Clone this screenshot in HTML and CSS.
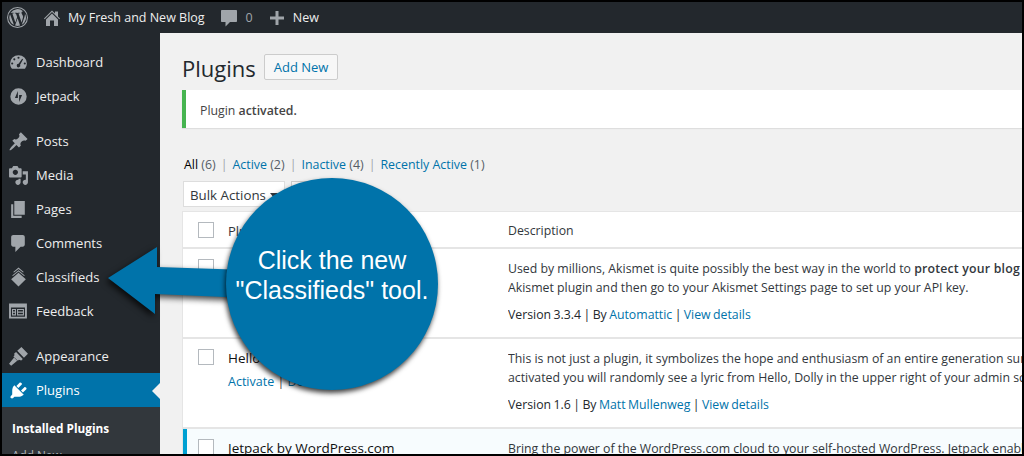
FILE: index.html
```html
<!DOCTYPE html>
<html lang="en">
<head>
<meta charset="utf-8">
<title>Plugins</title>
<link rel="stylesheet" href="styles.css">
</head>
<body>
<div class="frame">
  <header class="topbar">
    <svg class="wp" viewBox="0 0 20 20"><path fill-rule="evenodd" d="M10 0a10 10 0 1 0 0 20a10 10 0 0 0 0-20zM10 1a9 9 0 1 1 0 18a9 9 0 0 1 0-18zM2.200 10c0 3.100 1.800 5.800 4.400 7L2.900 6.800A7.800 7.800 0 0 0 2.200 10zM15.300 9.600c0-1-.4-1.600-.7-2.200-.4-.7-.8-1.200-.8-1.900 0-.7.600-1.400 1.400-1.400h.1A7.800 7.800 0 0 0 3.400 5.600h.5c.8 0 2.100-.1 2.100-.1.400 0 .5.600 0 .6l-.9.100 2.900 8.500 1.700-5.100-1.200-3.400-.8-.1c-.4 0-.4-.7 0-.6 0 0 1.300.1 2.100.1.800 0 2.100-.1 2.100-.1.400 0 .5.600 0 .6l-.9.100 2.900 8.500.8-2.700c.3-1.100.6-2 .6-2.700zM10.100 10.700l-2.400 7a7.800 7.800 0 0 0 4.800-.1l-.1-.1zM17 6.200c0 .3.100.6.100.9 0 .8-.2 1.700-.6 2.900l-2.400 6.900A7.800 7.800 0 0 0 17 6.200z"/></svg>
    <a class="bar-item site"><svg class="bar-icon" viewBox="0 0 20 20"><path d="M16 8.500l2 2-.7.700L10 3.900 2.700 11.200 2 10.500 10 2.500l3 3V3.500h3zM10 5.500l6 6V18h-4v-5.500H8V18H4v-6.500z"/></svg><span>My Fresh and New Blog</span></a>
    <a class="bar-item comments"><svg class="bar-icon" viewBox="0 0 20 20"><path d="M3 2h14c.6 0 1 .4 1 1v10c0 .6-.4 1-1 1h-6l-4.500 4.500V14H3c-.6 0-1-.4-1-1V3c0-.6.400-1 1-1z"/></svg><span class="count">0</span></a>
    <a class="bar-item new"><svg class="bar-icon" viewBox="0 0 20 20"><path d="M8.500 3h3v5.500H17v3h-5.500V17h-3v-5.500H3v-3h5.500z"/></svg><span>New</span></a>
  </header>
  <div class="body">
    <nav class="side">
      <ul class="menu">
        <li><svg viewBox="0 0 20 20"><path fill-rule="evenodd" d="M10 3a8 8 0 0 0-8 8c0 2 .7 3.700 1.800 5h12.400A8 8 0 0 0 18 11a8 8 0 0 0-8-8zM10 4.500a1 1 0 1 1 0 2a1 1 0 0 1 0-2zM6 6a1 1 0 1 1 0 2a1 1 0 0 1 0-2zM13.500 6.500l.9.500-2.900 5.200a1.700 1.700 0 1 1-1.400-.9zM4 10a1 1 0 1 1 0 2a1 1 0 0 1 0-2zM16 10a1 1 0 1 1 0 2a1 1 0 0 1 0-2z"/></svg>Dashboard</li>
        <li><svg viewBox="0 0 20 20"><path fill-rule="evenodd" d="M10 2.200a7.800 7.800 0 1 0 0 15.600a7.800 7.800 0 0 0 0-15.600zM9.400 4.800v6.700H6.600zM10.600 15.200V8.500h2.800z"/></svg>Jetpack</li>
        <li class="sep"><svg viewBox="0 0 20 20"><path d="M10.440 3.020l1.820-1.820 6.360 6.350-1.830 1.820c-1.050-.68-2.480-.57-3.410.36l-.75.75c-.92.93-1.040 2.350-.35 3.410l-1.830 1.820-2.410-2.410-2.800 2.790c-.42.420-3.380 2.710-3.800 2.290s1.860-3.390 2.280-3.810l2.790-2.790L4.100 9.360l1.830-1.820c1.050.69 2.480.57 3.400-.36l.75-.75c.93-.92 1.050-2.350.36-3.410z"/></svg>Posts</li>
        <li><svg viewBox="0 0 20 20"><path fill-rule="evenodd" d="M13 11V4c0-.55-.45-1-1-1h-1.670L9 1H5L3.670 3H2c-.55 0-1 .45-1 1v7c0 .55.450 1 1 1h10c.55 0 1-.45 1-1zM7 4.500c1.380 0 2.500 1.120 2.500 2.500S8.380 9.500 7 9.500 4.500 8.380 4.500 7 5.620 4.500 7 4.500zM14 6h5v10.500c0 1.380-1.120 2.500-2.500 2.500S14 17.880 14 16.500s1.120-2.500 2.500-2.500c.17 0 .34.020.5.050V9h-3V6zm-4 8.050V13h2v3.500c0 1.380-1.120 2.500-2.500 2.500S7 17.880 7 16.500 8.120 14 9.500 14c.17 0 .34.020.5.050z"/></svg>Media</li>
        <li><svg viewBox="0 0 20 20"><path d="M6 15V2h10v13H6zm-1 1h8v2H3V5h2v11z"/></svg>Pages</li>
        <li><svg viewBox="0 0 20 20"><path d="M5 2h9c1.100 0 2 .9 2 2v7c0 1.100-.9 2-2 2h-2l-5 5v-5H5c-1.100 0-2-.9-2-2V4c0-1.100.9-2 2-2z"/></svg>Comments</li>
        <li class="classified"><svg viewBox="0 0 20 20"><path d="M10 .5l5 4.200-.7.600L10 1.800 5.700 5.300 5 4.700zM10 3l6 5-.7.600L10 4.300 4.700 8.600 4 8zM10 5.500l7 6.200-7 6.800-7-6.800z"/></svg>Classifieds</li>
        <li><svg viewBox="0 0 20 20"><path fill-rule="evenodd" d="M1 2.400h17v14.200H1zM2.800 6.200v8.800h13.400V6.200zM3.800 7.600h3.800v6.200H3.800zM4.800 8.600v1.500h1.800V8.600zM4.800 11.200v1.500h1.800v-1.500zM8.600 7.600h6.600v6.200H8.600zM9.600 8.600v1.500h4.600V8.600zM9.600 11.200v1.500h4.600v-1.500z"/></svg>Feedback</li>
        <li class="sep"><svg viewBox="0 0 20 20"><path d="M8.800 4.600L12.800 1l6.200 6.400-3.800 3.900zM7.700 5.700l6.400 6.600-1.500 1.400-2.200-.6-1 1-4.200-4.200 1-1-.3-1.800zM5.800 11l3 3L3 18.700 1 17z"/></svg>Appearance</li>
        <li class="current"><svg viewBox="0 0 20 20"><path d="M13.110 4.360L9.870 7.600 8 5.730l3.240-3.240c.35-.34 1.050-.2 1.560.32.52.51.66 1.210.31 1.550zm-8 1.770l.91-1.120 9.010 9.010-1.190.84c-.71.71-2.630 1.160-3.820 1.160H6.140L4.900 17.260c-.59.59-1.540.59-2.120 0-.59-.58-.59-1.530 0-2.120l1.240-1.240v-3.880c0-1.130.4-3.070 1.090-3.890zm7.260 3.970l3.240-3.240c.34-.35 1.040-.21 1.550.31.52.51.66 1.210.31 1.550l-3.240 3.250z"/></svg>Plugins</li>
      </ul>
      <ul class="submenu">
        <li class="active">Installed Plugins</li>
        <li>Add New</li>
      </ul>
    </nav>
    <main class="content">
      <div class="heading"><h1>Plugins</h1><a class="btn">Add New</a></div>
      <div class="notice"><span>Plugin <b>activated.</b></span></div>
      <ul class="filters">
        <li><b>All</b> <span>(6)</span></li>
        <li><a>Active</a> <span>(2)</span></li>
        <li><a>Inactive</a> <span>(4)</span></li>
        <li><a>Recently Active</a> <span>(1)</span></li>
      </ul>
      <div class="actions"><div class="select">Bulk Actions<i></i></div><div class="apply">Apply</div></div>
      <div class="table">
        <div class="row head"><div class="check"><i></i></div><div class="name">Plugin</div><div class="desc">Description</div></div>
        <div class="row item">
          <div class="check"><i></i></div>
          <div class="name"><b>Akismet Anti-Spam</b><p><a>Activate</a> | <a>Delete</a></p></div>
          <div class="desc"><p>Used by millions, Akismet is quite possibly the best way in the world to <strong>protect your blog</strong> from spam. It keeps your site protected even while you sleep. To get started: activate the</p><p>Akismet plugin and then go to your Akismet Settings page to set up your API key.</p><p class="meta">Version 3.3.4 | By <a>Automattic</a> | <a>View details</a></p></div>
        </div>
        <div class="row item">
          <div class="check"><i></i></div>
          <div class="name"><b>Hello Dolly</b><p><a>Activate</a> | <a>Delete</a></p></div>
          <div class="desc"><p>This is not just a plugin, it symbolizes the hope and enthusiasm of an entire generation summed up in two words sung most famously by Louis Armstrong. When</p><p>activated you will randomly see a lyric from Hello, Dolly in the upper right of your admin screen on every page.</p><p class="meta">Version 1.6 | By <a>Matt Mullenweg</a> | <a>View details</a></p></div>
        </div>
        <div class="row item active-row">
          <div class="check"><i></i></div>
          <div class="name"><b>Jetpack by WordPress.com</b></div>
          <div class="desc"><p>Bring the power of the WordPress.com cloud to your self-hosted WordPress. Jetpack enables you to connect</p></div>
        </div>
      </div>
    </main>
  </div>
  <aside class="callout">
    <svg class="arrow" viewBox="0 0 140 72"><path d="M0 32L49 1V21L140 24V52L47 48V68z"/></svg>
    <div class="bubble">Click the new<br>"Classifieds" tool.</div>
  </aside>
</div>
</body>
</html>
```
FILE: styles.css
```css
* { box-sizing: border-box; }
html, body { margin: 0; padding: 0; }
body { width: 1024px; height: 456px; overflow: hidden; background: #000; font-family: "Open Sans", "Noto Sans", sans-serif; font-size: 12.5px; color: #444; }
ul { list-style: none; margin: 0; padding: 0; }
p { margin: 0; }
.frame { position: relative; width: 1024px; height: 456px; border: 2px solid #000; display: flex; flex-direction: column; overflow: hidden; }
.topbar { flex: none; height: 31px; background: #23282d; color: #eee; display: flex; align-items: center; padding-left: 5px; }
.wp { width: 21px; height: 21px; fill: #a0a5aa; margin-right: 14px; }
.bar-item { display: flex; align-items: center; }
.bar-icon { width: 20px; height: 20px; fill: #a0a5aa; margin-right: 4px; }
.site .bar-icon { margin-right: 6px; }
.site { margin-right: 14px; }
.comments { margin-right: 14px; }
.new .bar-icon { margin-right: 6px; }
.count { color: #a0a5aa; margin-left: 3px; }
.body { flex: 1; display: flex; min-height: 0; }
.side { flex: none; width: 158px; background: #23282d; color: #eee; padding-top: 12px; font-size: 13px; }
.menu li { height: 34px; display: flex; align-items: center; gap: 7px; padding-left: 6px; position: relative; }
.menu svg { width: 21px; height: 21px; fill: #a0a5aa; flex: none; }
.menu .sep { margin-top: 11px; }
.menu .current { background: #0073aa; color: #fff; }
.menu .current svg { fill: #fff; }
.menu .current::after { content: ""; position: absolute; right: 0; top: 10px; border: 8px solid transparent; border-right-color: #f1f1f1; border-left: 0; }
.submenu { background: #32373c; padding: 12px 0 0 10px; }
.submenu li { height: 27px; color: #b4b9be; font-size: 11.8px; line-height: 18px; }
.submenu .active { color: #fff; font-weight: 700; }
.content { flex: 1; min-width: 0; background: #f1f1f1; padding: 18px 0 0 22px; overflow: hidden; }
.heading { display: flex; align-items: center; gap: 8px; height: 32px; }
h1 { margin: 0; padding-top: 2px; font-size: 22px; font-weight: 400; color: #23282d; }
.btn { height: 26px; padding: 0 9px; border: 1px solid #ccc; border-radius: 2px; background: #f7f7f7; color: #0073aa; display: flex; align-items: center; font-size: 13px; }
.notice { margin-top: 7px; height: 38px; background: #fff; border-left: 4px solid #46b450; padding: 3px 0 0 14px; display: flex; align-items: center; font-size: 12.3px; box-shadow: 0 1px 1px rgba(0,0,0,.08); }
.notice b { font-weight: 600; }
.filters { display: flex; margin: 26px 0 0 2px; height: 20px; align-items: center; font-size: 12.4px; }
.filters li + li::before { content: "|"; color: #a0a5aa; margin: 0 5px; }
.filters b { font-weight: 400; color: #000; }
.filters span { color: #555d66; }
.filters a, .desc a, .name a { color: #0073aa; }
.actions { display: flex; gap: 6px; margin: 7px 0 0 1px; height: 26px; }
.select { width: 102px; background: #fff; border: 1px solid #ddd; color: #32373c; padding: 1px 0 0 6px; display: flex; align-items: center; font-size: 13.3px; position: relative; }
.select i { position: absolute; right: 6px; top: 11px; border: 4px solid transparent; border-top: 5px solid #32373c; border-bottom: 0; }
.apply { width: 50px; border: 1px solid #ccc; background: #f7f7f7; color: #555; padding-left: 8px; display: flex; align-items: center; }
.table { margin-top: 4px; background: #fff; border: 1px solid #e5e5e5; border-right: 0; border-bottom: 0; }
.row { display: flex; border-bottom: 2px solid #e5e5e5; }
.head { height: 37px; align-items: center; color: #32373c; font-size: 13px; }
.head .name, .head .desc { padding-top: 2px; }
.item { height: 90px; padding-top: 10px; }
.check { width: 45px; flex: none; padding-left: 15px; }
.check i { display: block; width: 16px; height: 16px; background: #fff; border: 1px solid #b4b9be; }
.name { width: 280px; flex: none; }
.name b { display: block; font-weight: 500; color: #111; font-size: 13.5px; }
.name p { margin-top: 6px; }
.desc { flex: 1; white-space: nowrap; overflow: hidden; line-height: 19px; color: #32373c; font-size: 12.3px; }
.desc strong { font-weight: 600; letter-spacing: .2px; }
.desc .meta { margin-top: 8px; color: #23282d; word-spacing: -.8px; }
.active-row { background: #f7fcfe; border-left: 4px solid #00a0d2; }
.active-row .check { width: 41px; padding-left: 11px; }
.callout { position: absolute; left: 0; top: 0; }
.arrow { position: absolute; left: 106px; top: 244px; width: 140px; height: 72px; fill: #0073aa; filter: drop-shadow(-2px 3px 3px rgba(0,0,0,.75)); overflow: visible; }
.bubble { position: absolute; left: 224px; top: 176px; width: 212px; height: 212px; border-radius: 50%; background: #0073aa; box-shadow: -1px 3px 5px rgba(0,0,0,.75); color: #fff; font-family: "Liberation Sans", Arial, sans-serif; font-size: 25px; line-height: 30px; text-align: center; padding-top: 67px; white-space: nowrap; }
```
